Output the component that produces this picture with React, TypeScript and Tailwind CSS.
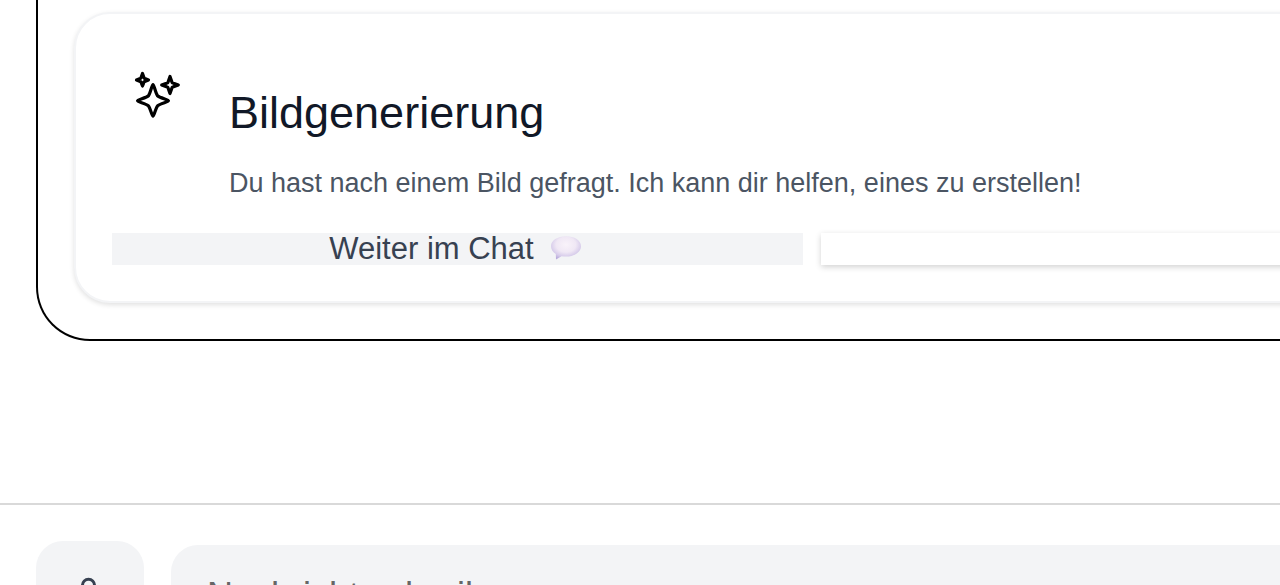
import React from "react";

function Sparkles() {
  return (
    <svg viewBox="0 -1 48 48" className="size-12 shrink-0 overflow-visible" fill="none" stroke="#000" strokeWidth="3.2" strokeLinejoin="round" aria-hidden="true">
      <path d="M20 15.500C21 15.500 22.500 24 24.500 26.700C27 29 35.500 30.500 35.500 31.800C35.500 33 27 34.500 24.500 36.900C22.500 39.500 21 47.200 20 47.200C19 47.200 17.500 39.500 15.500 36.900C13 34.500 4.500 33 4.500 31.800C4.500 30.500 13 29 15.500 26.700C17.500 24 19 15.500 20 15.500Z" />
      <path d="M9.500 4.500L11.200 9.300L15.500 11L11.200 12.700L9.500 17L7.800 12.700L3.500 11L7.800 9.300Z" />
      <path d="M37 7.500L39.200 13.800L45.300 16L39.200 18.200L37 24.500L34.800 18.200L28.700 16L34.800 13.800Z" />
    </svg>
  );
}

function SpeechBalloon() {
  return (
    <svg viewBox="0 0 32 26" className="h-[26px] w-8" aria-hidden="true">
      <defs>
        <radialGradient id="balloon" cx="0.5" cy="0.36" r="0.65">
          <stop offset="0" stopColor="#f9f3fa" />
          <stop offset="0.5" stopColor="#f0e8f5" />
          <stop offset="0.8" stopColor="#d6cbea" />
          <stop offset="1" stopColor="#b9abdc" />
        </radialGradient>
      </defs>
      <path d="M16 0.300C7.500 0.300 1 4.500 1 10.200C1 13.500 3 16.200 5.800 18.100L6 23.500L11.500 20.200C13 20.500 14.500 20.600 16 20.600C24.500 20.600 31 16 31 10.200S24.500 0.300 16 0.300Z" fill="url(#balloon)" />
    </svg>
  );
}

function Paperclip() {
  return (
    <svg viewBox="0 0 24 24" className="size-9" fill="none" stroke="#374151" strokeWidth="2" strokeLinecap="round" aria-hidden="true">
      <path d="M7 14V5.500a4 4 0 0 1 8 0v11M17.500 6.300v10a6 6 0 0 1-12 0" />
    </svg>
  );
}

export default function App() {
  return (
    <div className="h-screen overflow-hidden bg-white font-['Liberation_Sans',Arial,sans-serif]">
      <main className="w-[200vw] px-9">
        <section className="rounded-b-[54px] border-2 border-t-0 border-black px-9 pb-9 pt-3">
          <article className="rounded-[36px] border-2 border-[#f3f4f6] bg-white px-9 pb-9 pt-[54px] shadow-[0_2px_5px_rgba(0,0,0,0.12)]">
            <div className="flex gap-12 pl-[21px]">
              <Sparkles />
              <div className="pt-5">
                <h2 className="text-[45px] leading-[50px] text-[#111827]">Bildgenerierung</h2>
                <p className="mt-7 text-[27px] leading-[34px] text-[#4b5563]">Du hast nach einem Bild gefragt. Ich kann dir helfen, eines zu erstellen!</p>
              </div>
            </div>
            <div className="mt-[33px] flex gap-[18px]">
              <button type="button" className="flex h-8 w-[691px] items-center justify-center gap-4 bg-[#f3f4f6] pr-1 text-[31px] leading-8 text-[#374151]">
                Weiter im Chat
                <SpeechBalloon />
              </button>
              <button type="button" aria-label="Bild erstellen" className="h-8 grow bg-white shadow-[0_2px_6px_rgba(0,0,0,0.18)]" />
            </div>
          </article>
        </section>
      </main>
      <footer className="mt-[162px] flex items-start gap-[27px] border-t-2 border-[#d9d9d9] pl-9 pt-9">
        <button type="button" aria-label="Datei anhängen" className="flex size-27 shrink-0 items-start justify-center rounded-[27px] bg-[#f3f4f6] pt-9">
          <Paperclip />
        </button>
        <input type="text" aria-label="Nachricht" placeholder="Nachricht schreiben" className="mt-1 h-[102px] min-w-0 grow rounded-l-[27px] bg-[#f3f4f6] px-9 text-[36px] placeholder:text-[#666666]" />
      </footer>
    </div>
  );
}
